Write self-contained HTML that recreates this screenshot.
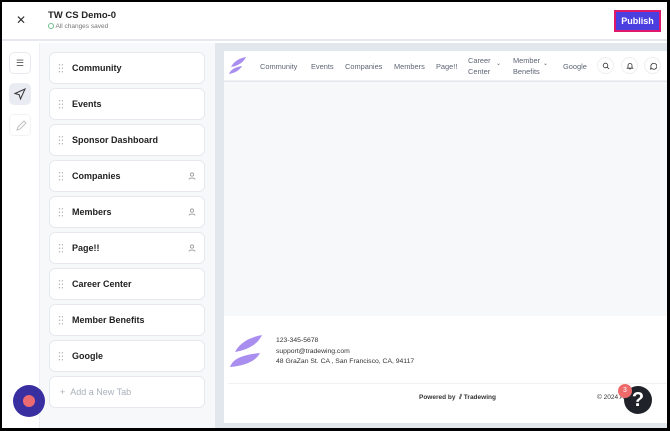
<!DOCTYPE html>
<html><head><meta charset="utf-8"><style>
*{box-sizing:border-box;margin:0;padding:0}
body{width:670px;height:431px;overflow:hidden;font-family:"Liberation Sans",sans-serif;background:#000;position:relative}
.frame{position:absolute;left:2px;top:2px;width:665px;height:426px;background:#fff;overflow:hidden}
.hdr{position:absolute;left:0;top:0;width:665px;height:39px;background:#fff;border-bottom:2px solid #e5e8ee}
.rail{position:absolute;left:0;top:41px;width:38px;height:390px;background:#fff;border-right:1px solid #eceff3}
.list{position:absolute;left:38px;top:41px;width:175px;height:390px;background:#f6f8fa}
.prev{position:absolute;left:213px;top:41px;width:452px;height:390px;background:#e2e7ee}
.card{position:absolute;left:9px;width:156px;height:32px;background:#fff;border:1px solid #e6e9ee;border-radius:6px;font-size:9px;font-weight:bold;color:#222;padding-left:22px;line-height:30px}
.dots{position:absolute;left:8px;top:10px;width:5px;height:10px;background-image:radial-gradient(circle,#bbb 0.7px,transparent 0.8px);background-size:3px 3.5px}
.usr{position:absolute;right:8px;top:11px;width:8px;height:8px}
.nav a{position:absolute;font-size:7.4px;color:#5d6474;text-decoration:none}
.ic{position:absolute;width:17px;height:17px;border:1px solid #eee;border-radius:50%}
.ic svg{position:absolute;left:4px;top:4px}
</style></head><body>
<div class="frame">
<div class="hdr">
 <div style="position:absolute;left:14px;top:11px;font-size:12px;color:#333">✕</div>
 <div style="position:absolute;left:46px;top:8px;font-size:9.5px;font-weight:bold;color:#222">TW CS Demo-0</div>
 <div style="position:absolute;left:46px;top:21px;font-size:6.5px;color:#777"><span style="display:inline-block;width:6px;height:6px;border:1px solid #6bbf8a;border-radius:50%;vertical-align:-1px"></span> All changes saved</div>
 <div style="position:absolute;left:612px;top:8px;width:47px;height:22px;background:#4b3fe0;border:2px solid #e0186b;color:#fff;font-size:9px;font-weight:bold;text-align:center;line-height:18px">Publish</div>
</div>
<div class="rail">
 <div style="position:absolute;left:7px;top:9px;width:22px;height:22px;border:1px solid #e6e9ee;border-radius:5px;text-align:center;font-size:9px;line-height:20px;color:#555">☰</div>
 <div style="position:absolute;left:7px;top:40px;width:22px;height:22px;background:#e9edf3;border-radius:5px">
  <svg width="22" height="22" viewBox="0 0 22 22"><path d="M6 10.5L16 6l-4.5 10-1.3-4.2z" fill="none" stroke="#333" stroke-width="1"/></svg></div>
 <div style="position:absolute;left:7px;top:71px;width:22px;height:22px;border:1px solid #f0f2f5;border-radius:5px">
  <svg width="22" height="22" viewBox="0 0 22 22"><path d="M7 15l1-3 6-6 2 2-6 6z" fill="none" stroke="#bbb" stroke-width="0.9"/></svg></div>
</div>
<div class="list">
 <div class="card" style="top:9px"><span class="dots"></span>Community</div>
 <div class="card" style="top:45px"><span class="dots"></span>Events</div>
 <div class="card" style="top:81px"><span class="dots"></span>Sponsor Dashboard</div>
 <div class="card" style="top:117px"><span class="dots"></span>Companies<svg class="usr" viewBox="0 0 8 8"><circle cx="4" cy="2.5" r="1.6" fill="none" stroke="#888" stroke-width=".7"/><path d="M1 7.5c0-2 6-2 6 0" fill="none" stroke="#888" stroke-width=".7"/></svg></div>
 <div class="card" style="top:153px"><span class="dots"></span>Members<svg class="usr" viewBox="0 0 8 8"><circle cx="4" cy="2.5" r="1.6" fill="none" stroke="#888" stroke-width=".7"/><path d="M1 7.5c0-2 6-2 6 0" fill="none" stroke="#888" stroke-width=".7"/></svg></div>
 <div class="card" style="top:189px"><span class="dots"></span>Page!!<svg class="usr" viewBox="0 0 8 8"><circle cx="4" cy="2.5" r="1.6" fill="none" stroke="#888" stroke-width=".7"/><path d="M1 7.5c0-2 6-2 6 0" fill="none" stroke="#888" stroke-width=".7"/></svg></div>
 <div class="card" style="top:225px"><span class="dots"></span>Career Center</div>
 <div class="card" style="top:261px"><span class="dots"></span>Member Benefits</div>
 <div class="card" style="top:297px"><span class="dots"></span>Google</div>
 <div class="card" style="top:333px;font-weight:normal;color:#aab0bb;padding-left:10px">+&nbsp;&nbsp;Add a New Tab</div>
</div>
<div style="position:absolute;left:11px;top:383px;width:32px;height:32px;border-radius:50%;background:#3a2fa0"><div style="position:absolute;left:10px;top:10px;width:12px;height:12px;border-radius:50%;background:#ec6b73"></div></div>
<div class="prev">
 <div style="position:absolute;left:9px;top:8px;width:443px;height:30px;background:#fff;border-bottom:1px solid #eef0f3" class="nav">
  <svg style="position:absolute;left:5px;top:6px" width="18" height="17" viewBox="0 0 18 17"><path d="M2 10C5 4 11 1 17 0 15 5 9 9 2 10z M0 17C2 12 7 10 13 9 11 13 6 16 0 17z" fill="#a98ef0"/></svg>
  <a style="left:36px;top:11px">Community</a><a style="left:87px;top:11px">Events</a><a style="left:121px;top:11px">Companies</a><a style="left:170px;top:11px">Members</a><a style="left:212px;top:11px">Page!!</a>
  <a style="left:244px;top:4px;line-height:11px">Career<br>Center</a><a style="left:272px;top:9px;font-size:6px">⌄</a>
  <a style="left:289px;top:4px;line-height:11px">Member<br>Benefits</a><a style="left:319px;top:9px;font-size:6px">⌄</a>
  <a style="left:339px;top:11px">Google</a>
  <div class="ic" style="left:373px;top:6px"><svg width="8" height="8" viewBox="0 0 8 8"><circle cx="3.5" cy="3.5" r="2.3" fill="none" stroke="#333" stroke-width=".8"/><path d="M5.2 5.2L7 7" stroke="#333" stroke-width=".8"/></svg></div>
  <div class="ic" style="left:397px;top:6px"><svg width="8" height="8" viewBox="0 0 8 8"><path d="M2 5.5V3.5a2 2 0 0 1 4 0v2l.7.7H1.3z M3.3 7h1.4" fill="none" stroke="#333" stroke-width=".8"/></svg></div>
  <div class="ic" style="left:420px;top:6px"><svg width="8" height="8" viewBox="0 0 8 8"><path d="M1.5 7l.6-1.6A3 3 0 1 1 3 6.6z" fill="none" stroke="#333" stroke-width=".8"/></svg></div>
 </div>
 <div style="position:absolute;left:9px;top:39px;width:443px;height:234px;background:#f7f8fa"></div>
 <div style="position:absolute;left:9px;top:273px;width:443px;height:107px;background:#fff">
  <svg style="position:absolute;left:6px;top:19px" width="32" height="32" viewBox="0 0 32 32"><path d="M5 17C10 7 21 2 32 0 28 9 18 15 5 17z M0 32C3 24 11 20 30 18 26 26 15 31 0 32z" fill="#a98ef0"/></svg>
  <div style="position:absolute;left:52px;top:20px;font-size:6.8px;color:#333;line-height:10.7px">123-345-5678<br>support@tradewing.com<br>48 GraZan St. CA , San Francisco, CA, 94117</div>
  <div style="position:absolute;left:4px;top:67px;width:439px;border-top:1px solid #f0f1f3"></div>
  <div style="position:absolute;left:195px;top:78px;font-size:6.5px;font-weight:bold;color:#333">Powered by &nbsp;⫽ Tradewing</div>
  <div style="position:absolute;left:373px;top:78px;font-size:6.5px;color:#333;white-space:nowrap">© 2024 All Comm</div>
  <div style="position:absolute;left:400px;top:70px;width:28px;height:28px;border-radius:50%;background:#1f2329;color:#fff;font-size:20px;font-weight:bold;text-align:center;line-height:28px">?</div>
  <div style="position:absolute;left:394px;top:68px;width:14px;height:14px;border-radius:50%;background:#ef6b6b;color:#fff;font-size:7px;text-align:center;line-height:14px">3</div>
 </div>
</div>
</div>
</body></html>
